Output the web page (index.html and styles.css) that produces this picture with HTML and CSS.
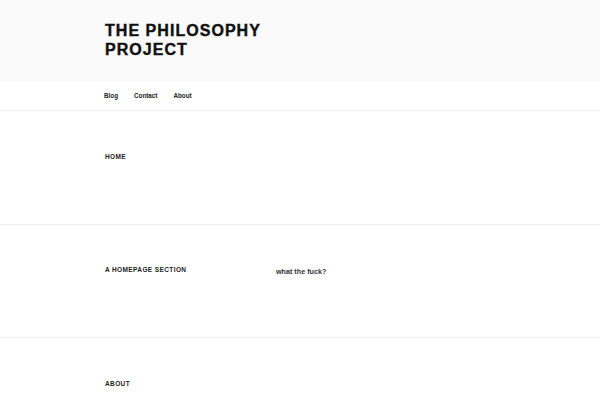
FILE: index.html
```html
<!DOCTYPE html>
<html>
<head>
<meta charset="utf-8">
<link rel="stylesheet" href="styles.css">
</head>
<body>
<header class="masthead">
  <div class="wrap">
    <h1 class="site-title">THE PHILOSOPHY<br>PROJECT</h1>
  </div>
</header>
<nav class="nav">
  <div class="wrap nav-inner">
    <a class="nav-link">Blog</a>
    <a class="nav-link">Contact</a>
    <a class="nav-link">About</a>
  </div>
</nav>
<section class="panel">
  <div class="wrap panel-inner">
    <h2 class="panel-title">Home</h2>
  </div>
</section>
<section class="panel">
  <div class="wrap panel-inner">
    <h2 class="panel-title">A Homepage Section</h2>
    <p class="panel-text">what the fuck?</p>
  </div>
</section>
<section class="panel">
  <div class="wrap panel-inner">
    <h2 class="panel-title">About</h2>
  </div>
</section>
</body>
</html>
```
FILE: styles.css
```css
html, body {
  margin: 0;
  padding: 0;
  background: #fff;
  font-family: "Liberation Sans", Arial, sans-serif;
  color: #222;
}
.wrap {
  padding-left: 105px;
  padding-right: 40px;
}
.masthead {
  background: #fafafa;
  height: 81px;
  box-sizing: border-box;
  padding-top: 21px;
}
.site-title {
  margin: 0;
  font-size: 16px;
  font-weight: 800;
  letter-spacing: 0.065em;
  line-height: 19px;
  color: #111;
  -webkit-text-stroke: 0.4px #111;
}
.nav {
  height: 29px;
  border-bottom: 1px solid #eee;
  background: #fff;
}
.nav-inner {
  display: flex;
  align-items: center;
  height: 29px;
  padding-left: 104px;
  gap: 16px;
}
.nav-link {
  font-size: 6.3px;
  font-weight: 700;
  color: #222;
}
.panel {
  height: 113.5px;
  border-bottom: 1px solid #eee;
  box-sizing: border-box;
}
.panel-inner {
  display: flex;
  padding-top: 40.5px;
}
.panel-title {
  margin: 0;
  width: 171px;
  flex: none;
  font-size: 6.5px;
  font-weight: 800;
  text-transform: uppercase;
  letter-spacing: 0.06em;
  line-height: 10px;
  color: #222;
}
.panel-text {
  margin: 1.5px 0 0;
  font-size: 7.2px;
  font-weight: 700;
  color: #333;
}
```
